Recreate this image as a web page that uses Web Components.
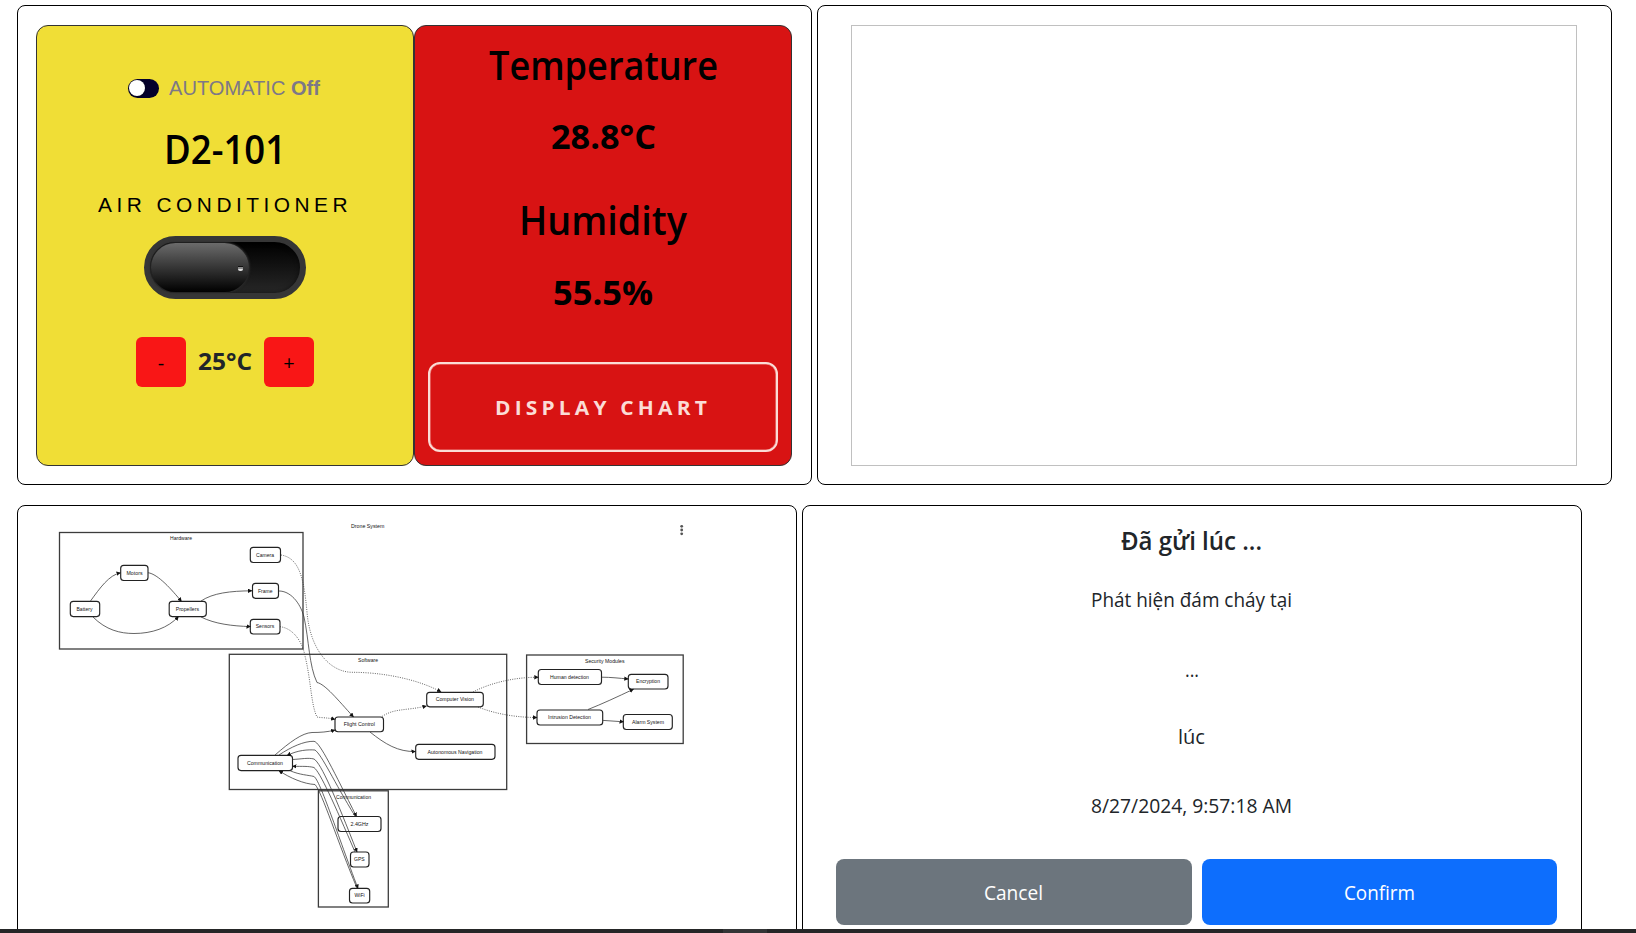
<!DOCTYPE html>
<html lang="vi">
<head>
<meta charset="utf-8">
<title>D2-101</title>
<style>
html,body{margin:0;height:100%;overflow:hidden;background:#fff}
body{font-family:"Open Sans","Noto Sans",sans-serif;color:#212529}
</style>
</head>
<body>
<dash-page></dash-page>
<script>
const define = (name, html, init) => customElements.define(name, class extends HTMLElement {
  connectedCallback() {
    if (this.shadowRoot) return;
    const t = document.createElement('template');
    t.innerHTML = html;
    this.attachShadow({mode: 'open'}).appendChild(t.content.cloneNode(true));
    if (init) init(this, this.shadowRoot);
  }
});

/* Text line condensed or widened to the width in its "w" attribute */
define('fit-text', `<style>
:host{display:block;flex:none;white-space:nowrap;text-align:left}
span{display:inline-block;transform-origin:0 50%}
</style><span><slot></slot></span>`, (el, root) => {
  const s = root.querySelector('span'), w = +el.getAttribute('w');
  el.style.width = w + 'px';
  s.style.transform = 'scaleX(' + (w / s.getBoundingClientRect().width) + ')';
});

define('dash-panel', `<style>
:host{display:flex;flex:none;box-sizing:border-box;border:1px solid #000;border-radius:8px;overflow:hidden}
</style><slot></slot>`);

define('mini-switch', `<style>
:host{display:flex;box-sizing:border-box;flex:none;width:31px;height:19px;border-radius:10px;background:#04002b;padding:1px}
i{width:16px;height:16px;border-radius:50%;background:#fff;box-shadow:0 1px 2px #0006}
</style><i></i>`);

define('power-switch', `<style>
:host{display:flex;box-sizing:border-box;flex:none;width:162px;height:63px;border:6px solid #363636;border-radius:32px;padding:1px;background:linear-gradient(#000,#272727);box-shadow:inset 0 0 5px #0008}
div{width:98px;height:49px;border-radius:25px;background:linear-gradient(#6b6b6b,#000);display:flex;align-items:center;justify-content:flex-end;box-sizing:border-box;padding:2px 6px 0 0;box-shadow:0 0 2px 1px #2a2a2a}
i{width:5px;height:5px;border-radius:0 0 2px 2px;background:linear-gradient(#111 0 25%,#888 25% 50%,#ddd 50%)}
</style><div><i></i></div>`);

define('step-button', `<style>
:host{display:flex;box-sizing:border-box;padding-top:2px;flex:none;width:50px;height:50px;border-radius:6px;background:#f91616;align-items:center;justify-content:center;color:#000;font:20px/48px "Open Sans",sans-serif}
</style><slot></slot>`);

define('air-card', `<style>
:host{display:flex;flex-direction:column;align-items:center;flex:none;box-sizing:border-box;width:378px;height:441px;border:1px solid #333;border-radius:12px;background:#f0de36;padding-top:50px}
.auto{display:flex;gap:10px;height:24px;align-items:center;margin-right:2px;font:20.8px/24px "Liberation Sans",sans-serif;color:#7d7887}
.room{margin-top:24.5px;font-size:40px;font-weight:600;line-height:48px;color:#000}
.kind{margin:20.5px 0 19px;font:21px/24px "Liberation Sans",sans-serif;letter-spacing:4.5px;color:#000}
.temp{display:flex;margin-top:38px;justify-content:center;gap:12px}
.temp fit-text{font-size:24px;line-height:47px;font-weight:700}
</style>
<div class="auto"><mini-switch></mini-switch><fit-text w="151">AUTOMATIC <b>Off</b></fit-text></div>
<fit-text class="room" w="122">D2-101</fit-text>
<fit-text class="kind" w="254">AIR CONDITIONER</fit-text>
<power-switch></power-switch>
<div class="temp"><step-button>-</step-button><fit-text w="54">25°C</fit-text><step-button>+</step-button></div>`);

define('climate-card', `<style>
:host{display:flex;flex-direction:column;align-items:center;flex:none;box-sizing:border-box;width:378px;height:441px;border:1px solid #333;border-radius:12px;background:#d81313;padding-top:14.5px;color:#000}
.h{font-size:40px;line-height:48px;font-weight:600}
.v{font-size:34px;line-height:40px;font-weight:700;margin:27.3px 0 40.7px}
.chart{display:flex;align-items:center;justify-content:center;box-sizing:border-box;width:350px;height:90px;margin-top:10px;padding-top:2px;border:2px solid #fbdcd6;box-shadow:inset 0 0 0 .6px #fbdcd699;border-radius:12px;color:#fbdcd6;font-size:20px;line-height:30px;font-weight:700;letter-spacing:4px}
</style>
<fit-text class="h" w="229">Temperature</fit-text>
<fit-text class="v" w="105">28.8°C</fit-text>
<fit-text class="h" w="168">Humidity</fit-text>
<fit-text class="v" w="100">55.5%</fit-text>
<div class="chart"><fit-text w="216">DISPLAY CHART</fit-text></div>`);

define('chart-frame', `<style>
:host{display:block;box-sizing:border-box;width:726px;height:441px;border:1px solid #c0c0c0}
</style>`);

define('drone-diagram', `<style>
:host{display:block;flex:none;width:778px;height:423px}
svg{display:block}
.c rect{fill:none;stroke:#3c3c3c;stroke-width:1.3}
.n rect{fill:none;stroke:#222;stroke-width:1.15}
text{font:4.7px "Liberation Sans",sans-serif;fill:#111}
.e path{fill:none;stroke:#333;stroke-width:.75;marker-end:url(#a)}
.e .d{stroke-dasharray:1 1.3}
.e .r{marker-end:none;marker-start:url(#b)}
</style>
<svg width="778" height="423" viewBox="18 506 778 423">
<defs>
<marker id="a" markerUnits="userSpaceOnUse" markerWidth="5" markerHeight="5" refX="4" refY="2.2" orient="auto"><path d="M0 0L4.4 2.2L0 4.4z" fill="#111"/></marker>
<marker id="b" markerUnits="userSpaceOnUse" markerWidth="5" markerHeight="5" refX="4" refY="2.2" orient="auto-start-reverse"><path d="M0 0L4.4 2.2L0 4.4z" fill="#111"/></marker>
</defs>
<g class="c"></g><g class="n"></g>
<g class="e">
<path d="M90.5 601C100 588 109 575 120.5 572.8"/>
<path d="M148 572.7C158 574 172 590 181.5 601.5"/>
<path d="M93 617C106 630 120 633.5 134 633.5C152 633.5 168 628 178.5 616.5"/>
<path d="M201 601C213 593 230 591 252 590.8"/>
<path d="M201 617C215 624 232 626 250.5 626.6"/>
<path class="d" d="M281 555C300 558 304 580 307 612C310 650 330 672 352 672.3C380 672.3 415 678 441 691.8"/>
<path d="M279 591C290 591 300 602 304 617C309 640 309 666 317 682.5C325 684 338 700 353.5 717"/>
<path class="d" d="M280 626.7C292 628 302 640 305 656C311 680 311 705 317 717C322 718 328 717.5 335 719.5"/>
<path class="d" d="M382 716.5C395 708 405 711 426.5 706"/>
<path d="M370 732C385 744 398 752 415.5 751.5"/>
<path d="M275 755C290 742 302 733 312 732.5C320 732.5 328 732 335 730"/>
<path class="d" d="M473 692C490 683 515 677 538.3 677.3"/>
<path class="d" d="M478 707C498 715 520 717.5 537 717.5"/>
<path d="M601.5 677.2C611 677.2 619 678.2 628.3 679"/>
<path d="M588 709.5C602 704 617 697 633.5 689.2"/>
<path d="M603 720.4L623.5 721.8"/>
<path d="M279 755C291 747 304 741 314 741.3C320 742 334 772 356.5 816.5"/>
<path class="r" d="M287 755.5C298 750 308 749.5 315 750C322 755 334 782 355 816"/>
<path d="M292.5 759.5C302 759 308 757.5 314 759C321 763 336 798 357 852"/>
<path class="r" d="M292.5 766.3C303 766.5 308 766 314 767.5C320 772 334 803 355 852"/>
<path d="M290 770.7C300 775 308 775 314 776.5C320 780 338 836 358 888.5"/>
<path class="r" d="M279 770.7C290 778 304 784 315 784.5C322 792 338 843 357 888"/>
</g>
<g fill="#555"><circle cx="681.7" cy="526.3" r="1.4"/><circle cx="681.7" cy="530" r="1.4"/><circle cx="681.7" cy="533.8" r="1.4"/></g>
</svg>`, (el, root) => {
  const clusters = [
    [59.5,532.5,303,649,'Hardware',170,192,538.6],
    [229.3,654.3,506.7,789.5,'Software',358,378,660],
    [526.6,655,683.2,743.5,'Security Modules',585,624.5,660.8],
    [318.4,790.8,388.3,907,'Communication',336,371,797],
  ];
  const nodes = [
    [70.3,601.3,99.7,616.6,'Battery',76.5,92.5],
    [120.7,565.3,148,580.5,'Motors',126.5,142.5],
    [169.2,601.3,206.3,616.6,'Propellers',175.7,199],
    [250.3,547.3,280.5,562.5,'Camera',256,274],
    [252.5,583.3,278.5,598.3,'Frame',258,272.5],
    [250.3,619.3,280,634,'Sensors',255.7,274.3],
    [426.7,692.3,483.3,706.8,'Computer Vision',435.7,474],
    [335,717,383.5,731.7,'Flight Control',343.7,375],
    [415.7,744.3,495,759.3,'Autonomous Navigation',427.5,482.5],
    [238,755.3,292.5,770.6,'Communication',247,283],
    [538.3,669.5,601.5,684.5,'Human detection',550,589],
    [628.3,674.3,668,689,'Encryption',636,660],
    [537,710,602.7,725,'Intrusion Detection',548,591],
    [623.3,714.5,672.3,729.5,'Alarm System',632,664],
    [338,816.5,381,831.5,'2.4GHz',350.5,368.5],
    [350.5,852,369,867,'GPS',354,364.7],
    [349.5,888.3,369.7,903,'WiFi',354.5,364.7],
  ];
  const text = (s, x1, x2, y) => `<text x="${x1}" y="${y + 1.7}" textLength="${x2 - x1}" lengthAdjust="spacingAndGlyphs">${s}</text>`;
  const rect = (a, r) => `<rect x="${a[0]}" y="${a[1]}" width="${a[2] - a[0]}" height="${a[3] - a[1]}" rx="${r}"/>`;
  root.querySelector('.c').innerHTML = text('Drone System', 351, 384.3, 526.6) +
    clusters.map(a => rect(a, 0) + text(a[4], a[5], a[6], a[7])).join('');
  root.querySelector('.n').innerHTML = nodes.map(a => rect(a, 3) + text(a[4], a[5], a[6], (a[1] + a[3]) / 2)).join('');
});

define('alert-box', `<style>
:host{display:flex;flex-direction:column;align-items:center;flex:none;width:777px;height:480px;font-size:20px;line-height:30px}
.t{font-size:25px;font-weight:600;margin:19.3px 0 29.9px}
.b{display:flex;align-self:stretch;gap:10px;padding:0 23px 0 33px;margin-top:38.1px}
.b div{flex:1;box-sizing:border-box;height:66px;padding-top:2px;border-radius:8px;display:flex;align-items:center;justify-content:center;color:#fff}
.no{background:#6c757d}.ok{background:#0d6efd}
</style>
<fit-text class="t" w="141">Đã gửi lúc ...</fit-text>
<fit-text w="201">Phát hiện đám cháy tại</fit-text>
<fit-text w="14" style="margin-top:40px">...</fit-text>
<fit-text w="27" style="margin-top:37px">lúc</fit-text>
<fit-text w="201" style="margin-top:38.7px">8/27/2024, 9:57:18 AM</fit-text>
<div class="b"><div class="no"><fit-text w="59">Cancel</fit-text></div><div class="ok"><fit-text w="71">Confirm</fit-text></div></div>`);

define('task-strip', `<style>
:host{display:flex;flex:none;height:4px;background:#252627;padding-left:723px}
i{width:44px;background:#343536}
</style><i></i>`);

define('dash-page', `<style>
:host{display:flex;flex-direction:column;height:933px;overflow:hidden}
main{flex:1;min-height:0;overflow:hidden;display:flex;flex-direction:column;gap:20px;padding:5px 0 0 17px}
section{display:flex;gap:5px;flex:none}
.top dash-panel{width:795px;height:480px;padding:19px 18px}
.top .r{padding:19px 33px}
.low dash-panel{width:780px;height:480px}
</style>
<main>
<section class="top"><dash-panel><air-card></air-card><climate-card></climate-card></dash-panel><dash-panel class="r"><chart-frame></chart-frame></dash-panel></section>
<section class="low"><dash-panel><drone-diagram></drone-diagram></dash-panel><dash-panel><alert-box></alert-box></dash-panel></section>
</main>
<task-strip></task-strip>`);
</script>
</body>
</html>
